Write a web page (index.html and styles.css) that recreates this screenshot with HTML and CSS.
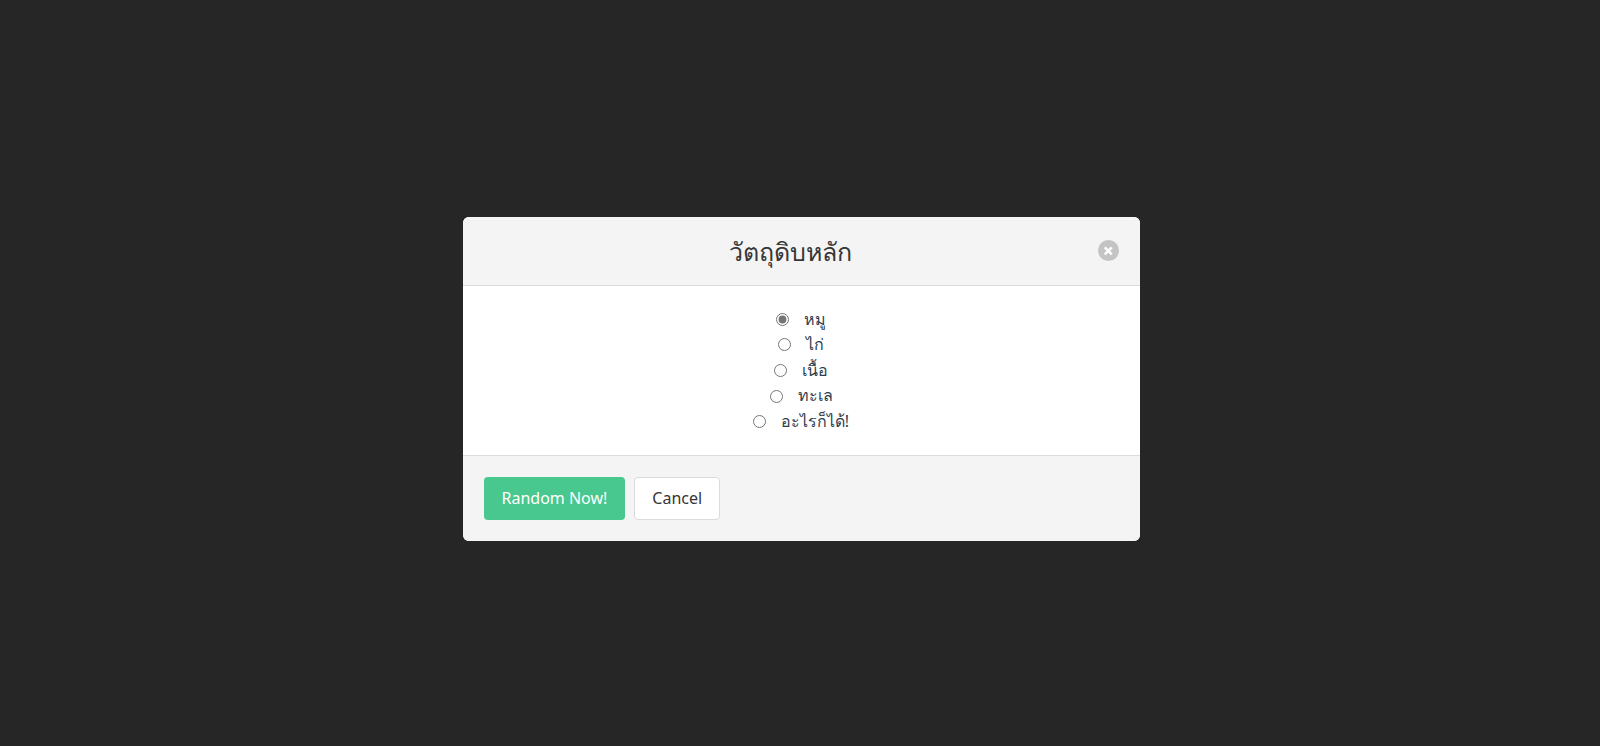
FILE: index.html
```html
<!DOCTYPE html>
<html lang="th">
<head>
<meta charset="utf-8">
<title>วัตถุดิบหลัก</title>
<link rel="stylesheet" href="styles.css">
</head>
<body>
<main class="modal">
  <form class="card" role="dialog" aria-labelledby="title">
    <header class="card-head">
      <h1 class="card-title" id="title">วัตถุดิบหลัก</h1>
      <button class="close" type="button" aria-label="Close">
        <svg class="close-icon" viewBox="0 0 21 21" aria-hidden="true"><path d="M6.8 7.3l7 7M13.8 7.3l-7 7"/></svg>
      </button>
    </header>
    <section class="card-body">
      <label class="choice"><input type="radio" name="main" checked><span>หมู</span></label>
      <label class="choice"><input type="radio" name="main"><span>ไก่</span></label>
      <label class="choice"><input type="radio" name="main"><span>เนื้อ</span></label>
      <label class="choice"><input type="radio" name="main"><span>ทะเล</span></label>
      <label class="choice"><input type="radio" name="main"><span>อะไรก็ได้!</span></label>
    </section>
    <footer class="card-foot">
      <button class="button primary" type="button">Random Now!</button>
      <button class="button" type="button">Cancel</button>
    </footer>
  </form>
</main>
</body>
</html>
```
FILE: styles.css
```css
* { box-sizing: border-box; }
body {
  margin: 0;
  background: #262626;
  color: #363636;
  font: 16px/1.6 "Noto Sans", "Open Sans", sans-serif;
}
.modal {
  min-height: 100vh;
  display: flex;
  align-items: center;
  justify-content: center;
  padding: 12px 0 0 2px;
}
.card {
  width: 100%;
  max-width: 677px;
  border-radius: 6px;
  overflow: hidden;
  background: #fff;
}
.card-head {
  display: flex;
  align-items: center;
  padding: 21px;
  background: #f4f4f4;
  border-bottom: 1px solid #dbdbdb;
}
.card-title {
  flex: 1;
  margin: 0;
  font-size: 25px;
  line-height: 26px;
  font-weight: 400;
  text-align: center;
}
.close {
  width: 21px;
  height: 21px;
  padding: 0;
  border: 0;
  border-radius: 50%;
  background: #c4c4c4;
}
.close-icon {
  display: block;
  width: 100%;
  height: 100%;
  fill: none;
  stroke: #fff;
  stroke-width: 2.6;
}
.card-body {
  display: flex;
  flex-direction: column;
  align-items: center;
  padding: 21px;
  color: #2c3e50;
}
.choice { display: flex; align-items: center; gap: 15px; }
.choice input {
  width: 13px;
  height: 13px;
  margin: 0;
  accent-color: #757575;
}
.card-foot {
  display: flex;
  gap: 9px;
  padding: 21px;
  background: #f4f4f4;
  border-top: 1px solid #dbdbdb;
}
.button {
  height: 43px;
  padding: 0 17px;
  border: 1px solid #dbdbdb;
  border-radius: 4px;
  background: #fff;
  color: #363636;
  font: inherit;
}
.primary { border-color: transparent; background: #48c78e; color: #fff; }
```
